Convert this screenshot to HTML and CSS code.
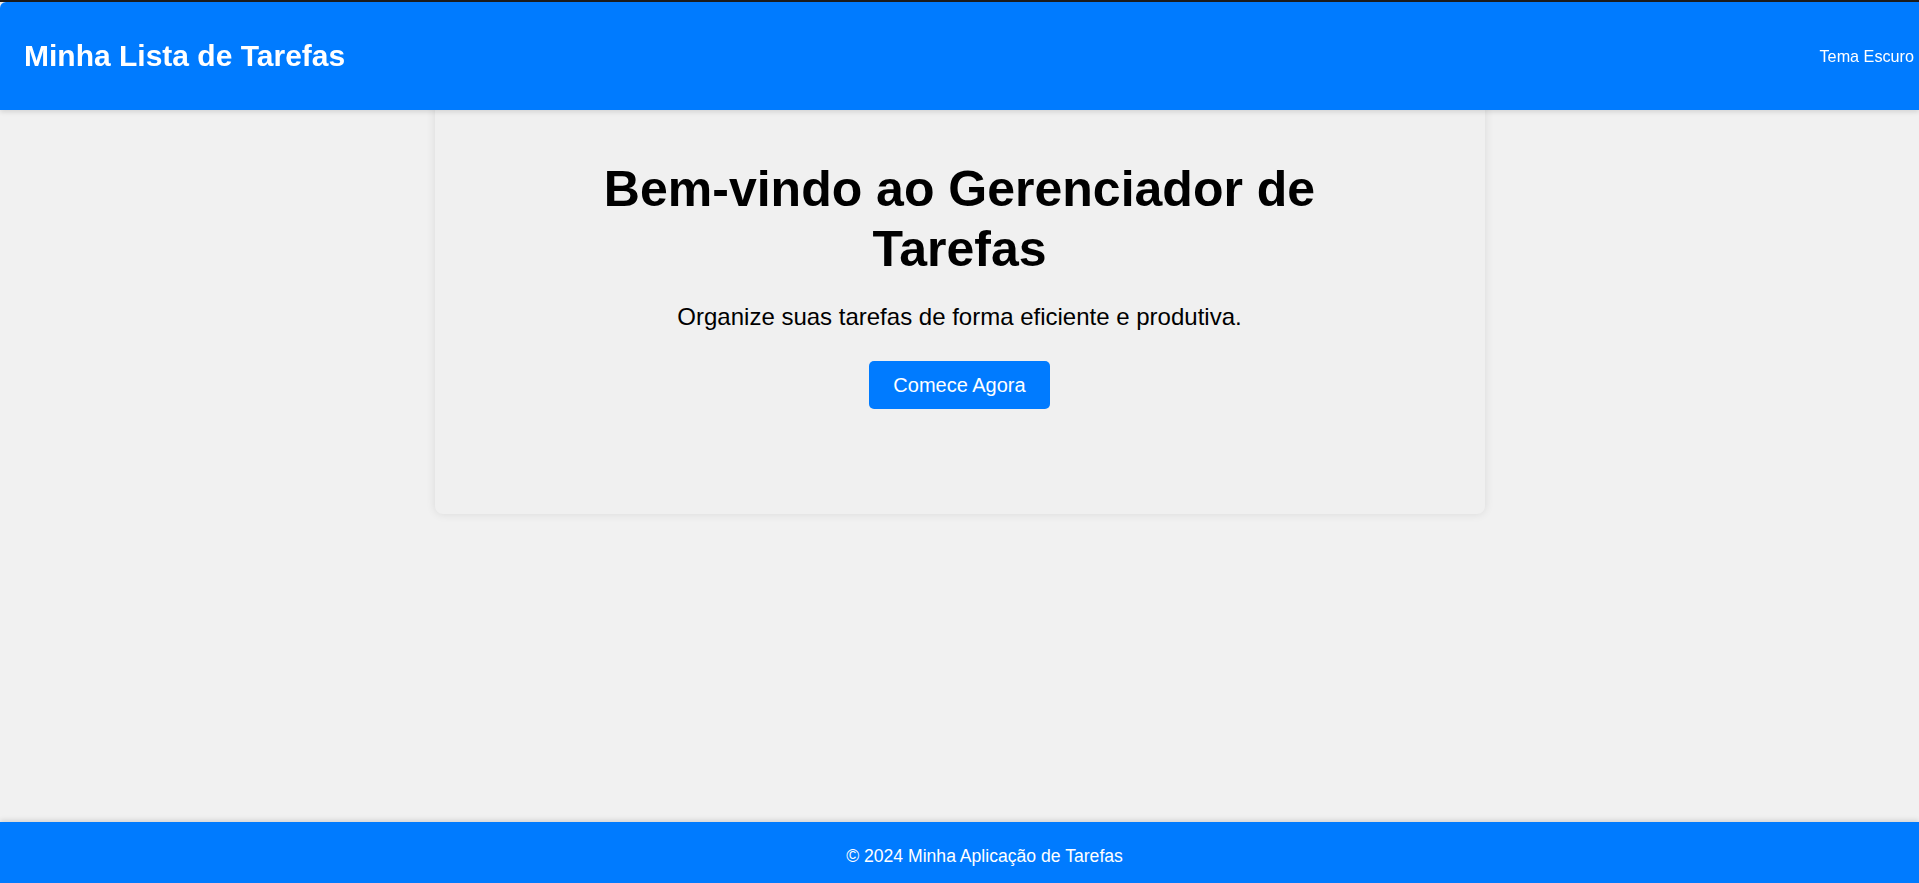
FILE: index.html
```html
<!DOCTYPE html>
<html lang="pt-BR">
<head>
<meta charset="utf-8">
<title>Minha Lista de Tarefas</title>
<link rel="stylesheet" href="styles.css">
</head>
<body>
<header class="site-header">
  <h1 class="brand">Minha Lista de Tarefas</h1>
  <button class="theme-toggle" type="button">Tema Escuro</button>
</header>
<main class="main">
  <section class="hero">
    <h2 class="hero-title">Bem-vindo ao Gerenciador de Tarefas</h2>
    <p class="hero-text">Organize suas tarefas de forma eficiente e produtiva.</p>
    <button class="cta" type="button">Comece Agora</button>
  </section>
</main>
<footer class="site-footer">
  <p class="footer-text">© 2024 Minha Aplicação de Tarefas</p>
</footer>
</body>
</html>
```
FILE: styles.css
```css
* { box-sizing: border-box; }

html { background: #f1f1f1; }

body {
  margin: 0;
  min-height: 100vh;
  border-top: 2px solid #1c1c1c;
  background: #f1f1f1;
  font-family: "Liberation Sans", Arial, sans-serif;
  color: #000;
  display: flex;
  flex-direction: column;
}

.site-header {
  position: fixed;
  top: 2px;
  left: 0;
  right: 0;
  z-index: 10;
  height: 108px;
  display: flex;
  align-items: center;
  justify-content: space-between;
  padding: 0 5px 0 24px;
  background: #007bff;
  color: #fff;
  border-top-left-radius: 6px;
  box-shadow: 0 2px 5px rgba(0, 0, 0, 0.12);
}

.brand {
  margin: 0;
  font-size: 30px;
  font-weight: bold;
  line-height: 1.15;
}

.theme-toggle {
  border: 0;
  background: transparent;
  color: #fff;
  font-family: inherit;
  font-size: 16.2px;
  padding: 0;
  cursor: pointer;
}

.main {
  flex: 1;
  padding-top: 52px;
}

.hero {
  width: 1050px;
  margin: 0 auto;
  padding: 105px 40px;
  background: #f0f0f0;
  border-radius: 8px;
  box-shadow: 0 0 10px rgba(0, 0, 0, 0.1);
  text-align: center;
}

.hero-title {
  max-width: 800px;
  margin: 0 auto;
  font-size: 50px;
  line-height: 60px;
  font-weight: bold;
}

.hero-text {
  margin: 24px 0 30px;
  font-size: 24px;
}

.cta {
  border: 0;
  border-radius: 5px;
  background: #007bff;
  color: #fff;
  font-family: inherit;
  font-size: 20px;
  line-height: 24px;
  padding: 12px 24px;
  cursor: pointer;
}

.site-footer {
  height: 61px;
  display: flex;
  align-items: center;
  justify-content: center;
  padding-left: 50px;
  background: #007bff;
  color: #fff;
  box-shadow: 0 -2px 5px rgba(0, 0, 0, 0.12);
}

.footer-text {
  margin: 8px 0 0;
  font-size: 17.6px;
}
```
